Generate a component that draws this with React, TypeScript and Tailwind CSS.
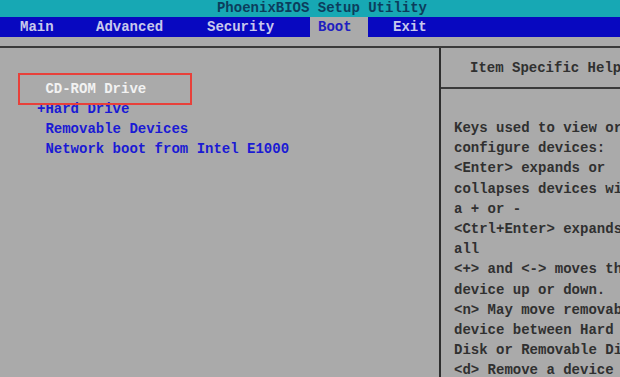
export default function App() {
  const menu = [
    { label: 'Main', x: 'w-[96px] pl-[20px]' },
    { label: 'Advanced', x: 'w-[111px] pl-0' },
    { label: 'Security', x: 'w-[103px] pl-0' },
  ];

  const bootItems = [
    { text: ' CD-ROM Drive', selected: true },
    { text: '+Hard Drive', selected: false },
    { text: ' Removable Devices', selected: false },
    { text: ' Network boot from Intel E1000', selected: false },
  ];

  const help = [
    'Keys used to view or',
    'configure devices:',
    '<Enter> expands or',
    'collapses devices with',
    'a + or -',
    '<Ctrl+Enter> expands',
    'all',
    '<+> and <-> moves the',
    'device up or down.',
    '<n> May move removable',
    'device between Hard',
    'Disk or Removable Disk',
    '<d> Remove a device',
  ];

  return (
    <div
      className="w-[620px] h-[377px] overflow-hidden bg-[#aaaaaa] flex flex-col text-[14px] font-bold leading-[20px]"
      style={{ fontFamily: '"Liberation Mono", "DejaVu Sans Mono", monospace' }}
    >
      {/* Titre */}
      <div className="h-[17px] shrink-0 bg-[#17a8b4] flex items-center justify-center pl-[24px] text-[#0c3d5c] leading-[17px]">
        PhoenixBIOS Setup Utility
      </div>

      {/* Menu */}
      <div className="h-[20px] shrink-0 bg-[#0808c0] flex items-center text-[#c8c8ec] leading-[20px]">
        {menu.map((m) => (
          <div key={m.label} className={m.x}>{m.label}</div>
        ))}
        <div className="w-[58px] h-full bg-[#aaaaaa] text-[#2020c0] pl-[8px]">Boot</div>
        <div className="pl-[25px]">Exit</div>
      </div>

      <div className="h-[9px] shrink-0" />

      {/* Corps */}
      <div className="flex-1 min-h-0 overflow-hidden flex border-t-2 border-[#3a3a3a]">
        <div className="relative w-[441px] shrink-0 border-r-2 border-[#2e2e2e] pt-[31px] pl-[37px]">
          {bootItems.map((item) => (
            <div
              key={item.text}
              className={`whitespace-pre ${item.selected ? 'text-[#f2f2f2]' : 'text-[#1a1ad4]'}`}
            >
              {item.text}
            </div>
          ))}
          <div className="absolute left-[18px] top-[25px] w-[174px] h-[32px] border-2 border-[#e8403a]" />
        </div>

        <div className="flex-1 overflow-hidden text-[#303030]">
          <div className="h-[41px] border-b-2 border-[#3a3a3a] pl-[29px] pt-[10px] whitespace-pre">
            Item Specific Help
          </div>
          <div className="pl-[13px] pt-[29px] leading-[20.2px]">
            {help.map((line, i) => (
              <div key={i} className="whitespace-pre">{line}</div>
            ))}
          </div>
        </div>
      </div>
    </div>
  );
}
